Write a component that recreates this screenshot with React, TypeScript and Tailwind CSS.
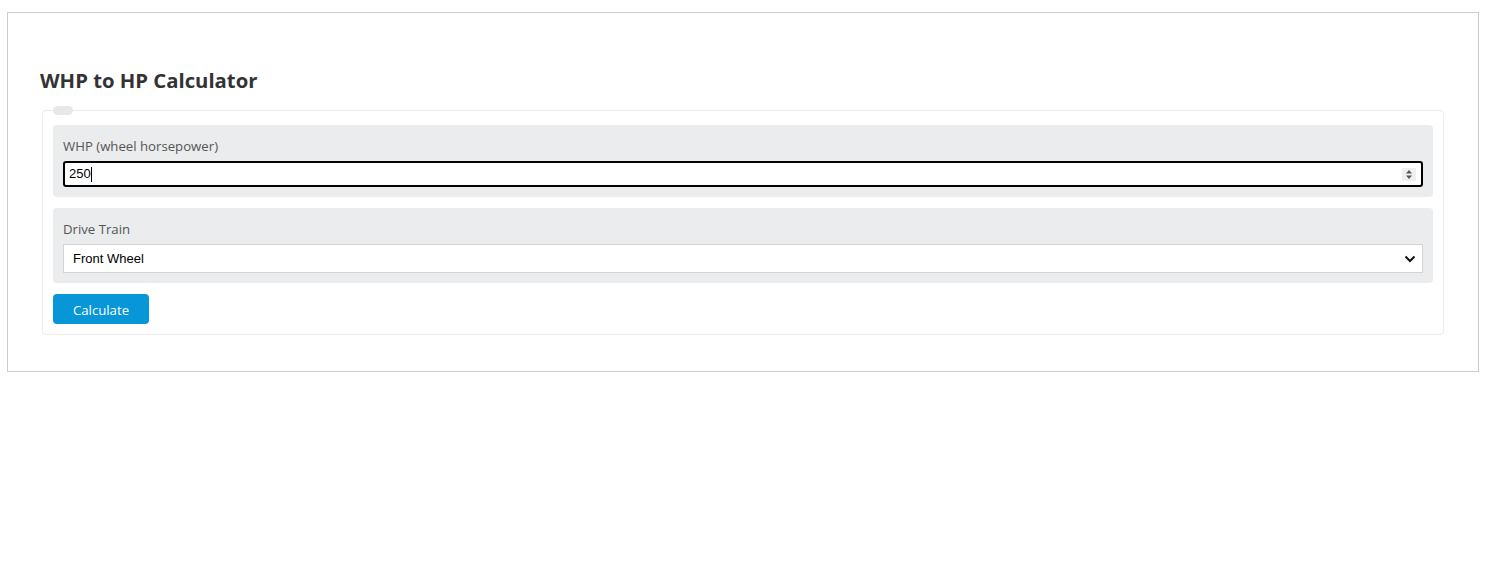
import React from "react";

const App = () => {
  return (
    <div className="bg-white min-h-[588px] pt-[12px] pl-[7px] pr-[17px]" style={{ fontFamily: '"Open Sans", "Noto Sans", sans-serif' }}>
      <div className="border border-[#cccccc] h-[360px] px-[34px] pt-[53px]">
        <h2 className="text-[20.3px] leading-[28px] font-bold text-[#333333] ml-[-2px] mb-[12px]">
          WHP to HP Calculator
        </h2>
        <fieldset className="border border-[#ececec] rounded-[4px] px-[10px] pt-[10px] pb-[10px]">
          <legend className="w-[20px] h-[9px] rounded-full bg-[#e8e8e8]"></legend>

          <div className="bg-[#ebeced] rounded-[4px] px-[10px] pt-[11px] pb-[10px]">
            <div className="text-[13.2px] leading-[20px] text-[#555555] mb-[5px]">WHP (wheel horsepower)</div>
            <div className="h-[26px] border-2 border-black rounded-[3px] bg-white flex items-center pl-[4px] pr-[5px]">
              <span className="text-[13px] text-black" style={{ fontFamily: '"Liberation Sans", Arial, sans-serif' }}>
                250
              </span>
              <span className="w-px h-[15px] bg-black"></span>
              <div className="ml-auto w-[14px] h-[13px] bg-[#efefef] flex items-center justify-center">
                <svg width="8" height="11" viewBox="0 0 8 11">
                  <path d="M4 1 L7 4.5 L1 4.5 Z" fill="#555" />
                  <path d="M4 10 L7 6.5 L1 6.5 Z" fill="#555" />
                </svg>
              </div>
            </div>
          </div>

          <div className="bg-[#ebeced] rounded-[4px] px-[10px] pt-[11px] pb-[10px] mt-[11px]">
            <div className="text-[13.2px] leading-[20px] text-[#555555] mb-[5px]">Drive Train</div>
            <div className="h-[29px] border border-[#d4d4d4] bg-white flex items-center pl-[9px] pr-[6px]">
              <span className="text-[13px] text-black" style={{ fontFamily: '"Liberation Sans", Arial, sans-serif' }}>
                Front Wheel
              </span>
              <svg className="ml-auto" width="12" height="8" viewBox="0 0 12 8">
                <path d="M1.5 1.5 L6 6 L10.5 1.5" fill="none" stroke="#111" strokeWidth="2" />
              </svg>
            </div>
          </div>

          <button className="mt-[11px] h-[30px] w-[96px] rounded-[4px] bg-[#0796d8] text-white text-[13.2px] pt-[3px]">
            Calculate
          </button>
        </fieldset>
      </div>
    </div>
  );
};

export default App;
